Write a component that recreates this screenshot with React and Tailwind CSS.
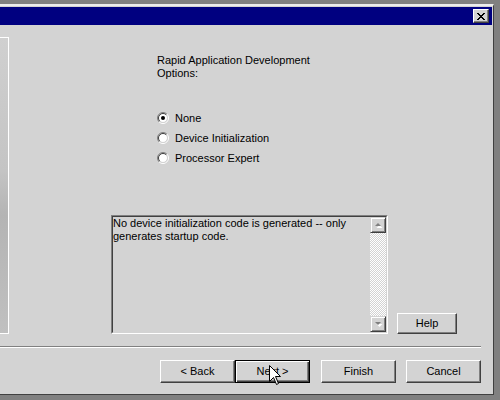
import React from "react";

const btn =
  "flex items-center justify-center bg-[#d3d3d3] text-[11px] leading-[13px] text-black border border-t-white border-l-white border-r-[#404040] border-b-[#404040] shadow-[inset_-1px_-1px_0_#808080]";

function Radio({ checked, label }) {
  return (
    <div className="flex items-center h-[20px]">
      <svg width="12" height="12" viewBox="0 0 12 12" className="shrink-0">
        <circle cx="6" cy="6" r="4.2" fill="#ffffff" />
        <path d="M2.1 9.9 A5.5 5.5 0 0 1 9.9 2.1" stroke="#808080" strokeWidth="1" fill="none" />
        <path d="M9.9 2.1 A5.5 5.5 0 0 1 2.1 9.9" stroke="#ffffff" strokeWidth="1" fill="none" />
        <path d="M2.8 9.2 A4.5 4.5 0 0 1 9.2 2.8" stroke="#404040" strokeWidth="1" fill="none" />
        <path d="M9.2 2.8 A4.5 4.5 0 0 1 2.8 9.2" stroke="#d3d3d3" strokeWidth="1" fill="none" />
        {checked && <circle cx="6" cy="6" r="2" fill="#000000" />}
      </svg>
      <span className="ml-[6px]">{label}</span>
    </div>
  );
}

function Arrow({ up }) {
  return (
    <div className="w-[16px] h-[16px] bg-[#d3d3d3] border border-t-[#d3d3d3] border-l-[#d3d3d3] border-r-[#404040] border-b-[#404040] shadow-[inset_1px_1px_0_#fff,inset_-1px_-1px_0_#808080] flex items-center justify-center">
      <svg width="9" height="6" viewBox="0 0 9 6">
        {up ? (
          <>
            <path d="M1.5 5 L4.5 2 L7.5 5 Z" fill="#ffffff" transform="translate(1 1)" />
            <path d="M1 4 L4 1 L7 4 Z" fill="#808080" />
          </>
        ) : (
          <>
            <path d="M1.5 2 L7.5 2 L4.5 5 Z" fill="#ffffff" transform="translate(1 1)" />
            <path d="M1 1 L7 1 L4 4 Z" fill="#808080" />
          </>
        )}
      </svg>
    </div>
  );
}

export default function App() {
  return (
    <div className="w-[500px] h-[400px] bg-[#808080] overflow-hidden font-['Liberation_Sans',Arial,sans-serif] text-black text-[11px] leading-[13px] relative">
      <div className="h-[4px]" />
      <div className="w-[494px] h-[391px] bg-[#d3d3d3] border-t-2 border-t-[#ececec] border-r border-r-[#404040] border-b border-b-[#404040] pt-[1px] pr-[1px] flex flex-col">
        {/* Title bar */}
        <div className="h-[18px] w-[492px] bg-[#000080] flex items-center justify-end pr-[3px]">
          <div className="w-[16px] h-[14px] bg-[#d3d3d3] border border-t-white border-l-white border-r-[#404040] border-b-[#404040] shadow-[inset_-1px_-1px_0_#808080] flex items-center justify-center">
            <svg width="8" height="7" viewBox="0 0 8 7" shapeRendering="crispEdges">
              <path d="M0 0h2v1h1v1h2v-1h1v-1h2v1h-1v1h-1v1h-1v1h1v1h1v1h1v1h-2v-1h-1v-1h-2v1h-1v1h-2v-1h1v-1h1v-1h1v-1h-1v-1h-1v-1h-1z" fill="#000" />
            </svg>
          </div>
        </div>

        {/* Body */}
        <div className="flex h-[321px]">
          <div className="w-[9px] mt-[12px] h-[297px] border-t border-r border-b border-white bg-[linear-gradient(180deg,#d0d0d0_0%,#c4c4c4_45%,#b4b4b4_60%,#c0c0c0_100%)]" />
          <div className="flex flex-col">
            <div className="ml-[148px] mt-[29px]">
              <div>Rapid Application Development</div>
              <div>Options:</div>
            </div>
            <div className="ml-[148px] mt-[28px] flex flex-col">
              <Radio checked label="None" />
              <Radio label="Device Initialization" />
              <Radio label="Processor Expert" />
            </div>
            <div className="flex items-end mt-[47px]">
              <div className="ml-[102px] w-[277px] h-[119px] border border-t-[#808080] border-l-[#808080] border-r-white border-b-white">
                <div className="w-full h-full border border-t-[#404040] border-l-[#404040] border-r-[#d3d3d3] border-b-[#d3d3d3] flex">
                  <div className="flex-1 pl-[0px]">
                    <div>No device initialization code is generated -- only</div>
                    <div>generates startup code.</div>
                  </div>
                  <div className="w-[16px] flex flex-col">
                    <Arrow up />
                    <div className="flex-1 bg-[repeating-conic-gradient(#ffffff_0_25%,#d3d3d3_0_50%)] bg-[length:2px_2px]" />
                    <Arrow />
                  </div>
                </div>
              </div>
              <div className={`${btn} ml-[9px] w-[60px] h-[21px]`}>Help</div>
            </div>
          </div>
        </div>

        {/* Separator */}
        <div className="w-[481px] h-[2px] border-t border-t-[#808080] border-b border-b-white" />

        {/* Buttons */}
        <div className="flex mt-[12px] ml-[160px]">
          <div className={`${btn} w-[75px] h-[23px]`}>&lt; Back</div>
          <div className="relative w-[75px] h-[23px] border border-black bg-[#d3d3d3] shadow-[inset_1px_1px_0_#fff,inset_-1px_-1px_0_#404040,inset_-2px_-2px_0_#808080] flex items-center justify-center">
            Next &gt;
            <svg
              width="13"
              height="21"
              viewBox="0 0 13 21"
              className="absolute left-[33px] top-[4px]"
              shapeRendering="crispEdges"
            >
              <path
                d="M0.5 0.5 L0.5 16.5 L4.5 12.5 L7.5 19.5 L9.5 18.5 L6.5 11.5 L11.5 11.5 Z"
                fill="#ffffff"
                stroke="#000000"
                strokeWidth="1"
                shapeRendering="auto"
              />
            </svg>
          </div>
          <div className={`${btn} w-[75px] h-[23px] ml-[11px]`}>Finish</div>
          <div className={`${btn} w-[75px] h-[23px] ml-[10px]`}>Cancel</div>
        </div>
      </div>
    </div>
  );
}
